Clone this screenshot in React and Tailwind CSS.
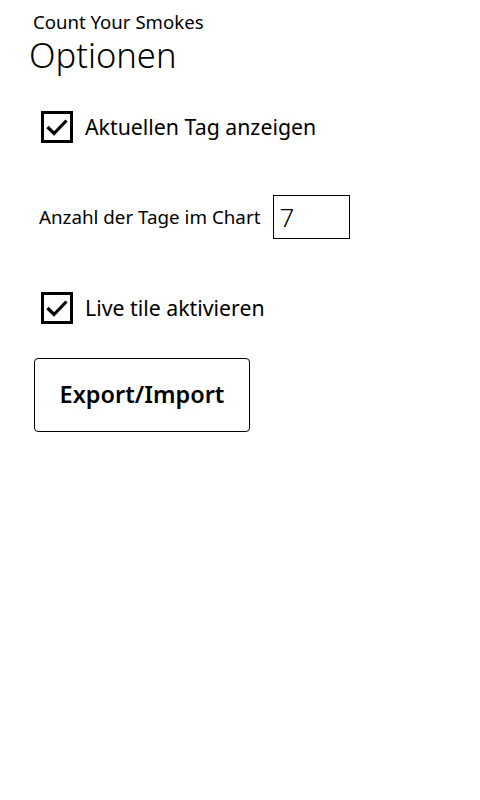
export default function App() {
  return (
    <div className="w-[480px] h-[800px] bg-white text-black font-['Noto_Sans',sans-serif] overflow-hidden">
      <div className="pl-[33px] pt-[12px] text-[18.6px] leading-[20px]">Count Your Smokes</div>
      <div className="pl-[29px] text-[34.5px] leading-[46px] font-light">Optionen</div>

      <div className="flex items-center mt-[33px] ml-[41px] gap-[12px]">
        <Check />
        <span className="text-[21.3px]">Aktuellen Tag anzeigen</span>
      </div>

      <div className="flex items-center mt-[52px] ml-[39px] gap-[13px]">
        <span className="text-[18.8px]">Anzahl der Tage im Chart</span>
        <div className="w-[77px] h-[44px] border border-black flex items-center pl-[5px] text-[26px] font-light">7</div>
      </div>

      <div className="flex items-center mt-[53px] ml-[41px] gap-[12px]">
        <Check />
        <span className="text-[21.3px]">Live tile aktivieren</span>
      </div>

      <button className="mt-[34px] ml-[34px] w-[216px] h-[74px] border border-black rounded-[4px] text-[23.5px] font-semibold">
        Export/Import
      </button>
    </div>
  );
}

function Check() {
  return (
    <div className="w-[32px] h-[32px] border-[3px] border-black flex items-center justify-center">
      <svg width="22" height="18" viewBox="0 0 22 18">
        <path d="M1.5 9 L8 15.5 L20.5 2.5" fill="none" stroke="black" strokeWidth="3.2" />
      </svg>
    </div>
  );
}
